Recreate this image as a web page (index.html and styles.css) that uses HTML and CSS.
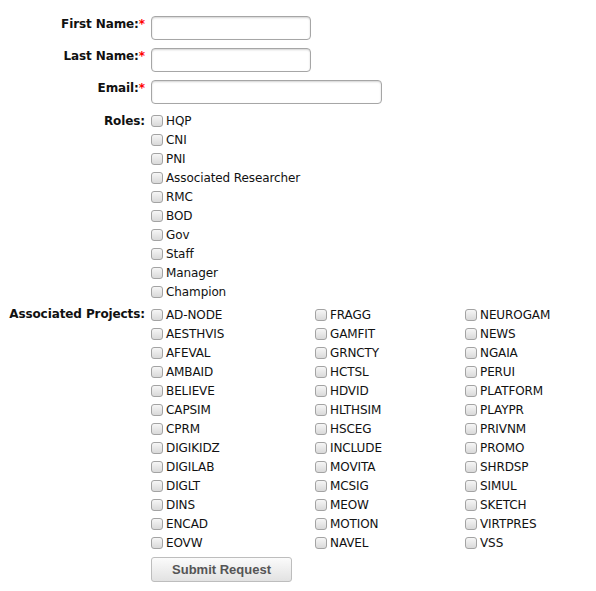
FILE: index.html
```html
<!DOCTYPE html>
<html>
<head>
<meta charset="utf-8">
<link rel="stylesheet" href="styles.css">
</head>
<body>
<form class="form">
  <div class="label">First Name:<span class="req">*</span></div>
  <div class="field"><input class="text short" type="text"></div>

  <div class="label">Last Name:<span class="req">*</span></div>
  <div class="field"><input class="text short" type="text"></div>

  <div class="label">Email:<span class="req">*</span></div>
  <div class="field"><input class="text long" type="text"></div>

  <div class="label list-label">Roles:</div>
  <div class="field roles">
    <label class="item"><input type="checkbox" class="cb">HQP</label>
    <label class="item"><input type="checkbox" class="cb">CNI</label>
    <label class="item"><input type="checkbox" class="cb">PNI</label>
    <label class="item"><input type="checkbox" class="cb">Associated Researcher</label>
    <label class="item"><input type="checkbox" class="cb">RMC</label>
    <label class="item"><input type="checkbox" class="cb">BOD</label>
    <label class="item"><input type="checkbox" class="cb">Gov</label>
    <label class="item"><input type="checkbox" class="cb">Staff</label>
    <label class="item"><input type="checkbox" class="cb">Manager</label>
    <label class="item"><input type="checkbox" class="cb">Champion</label>
  </div>

  <div class="label list-label projects-label">Associated Projects:</div>
  <div class="field projects">
    <div class="col">
      <label class="item"><input type="checkbox" class="cb">AD-NODE</label>
      <label class="item"><input type="checkbox" class="cb">AESTHVIS</label>
      <label class="item"><input type="checkbox" class="cb">AFEVAL</label>
      <label class="item"><input type="checkbox" class="cb">AMBAID</label>
      <label class="item"><input type="checkbox" class="cb">BELIEVE</label>
      <label class="item"><input type="checkbox" class="cb">CAPSIM</label>
      <label class="item"><input type="checkbox" class="cb">CPRM</label>
      <label class="item"><input type="checkbox" class="cb">DIGIKIDZ</label>
      <label class="item"><input type="checkbox" class="cb">DIGILAB</label>
      <label class="item"><input type="checkbox" class="cb">DIGLT</label>
      <label class="item"><input type="checkbox" class="cb">DINS</label>
      <label class="item"><input type="checkbox" class="cb">ENCAD</label>
      <label class="item"><input type="checkbox" class="cb">EOVW</label>
    </div>
    <div class="col">
      <label class="item"><input type="checkbox" class="cb">FRAGG</label>
      <label class="item"><input type="checkbox" class="cb">GAMFIT</label>
      <label class="item"><input type="checkbox" class="cb">GRNCTY</label>
      <label class="item"><input type="checkbox" class="cb">HCTSL</label>
      <label class="item"><input type="checkbox" class="cb">HDVID</label>
      <label class="item"><input type="checkbox" class="cb">HLTHSIM</label>
      <label class="item"><input type="checkbox" class="cb">HSCEG</label>
      <label class="item"><input type="checkbox" class="cb">INCLUDE</label>
      <label class="item"><input type="checkbox" class="cb">MOVITA</label>
      <label class="item"><input type="checkbox" class="cb">MCSIG</label>
      <label class="item"><input type="checkbox" class="cb">MEOW</label>
      <label class="item"><input type="checkbox" class="cb">MOTION</label>
      <label class="item"><input type="checkbox" class="cb">NAVEL</label>
    </div>
    <div class="col">
      <label class="item"><input type="checkbox" class="cb">NEUROGAM</label>
      <label class="item"><input type="checkbox" class="cb">NEWS</label>
      <label class="item"><input type="checkbox" class="cb">NGAIA</label>
      <label class="item"><input type="checkbox" class="cb">PERUI</label>
      <label class="item"><input type="checkbox" class="cb">PLATFORM</label>
      <label class="item"><input type="checkbox" class="cb">PLAYPR</label>
      <label class="item"><input type="checkbox" class="cb">PRIVNM</label>
      <label class="item"><input type="checkbox" class="cb">PROMO</label>
      <label class="item"><input type="checkbox" class="cb">SHRDSP</label>
      <label class="item"><input type="checkbox" class="cb">SIMUL</label>
      <label class="item"><input type="checkbox" class="cb">SKETCH</label>
      <label class="item"><input type="checkbox" class="cb">VIRTPRES</label>
      <label class="item"><input type="checkbox" class="cb">VSS</label>
    </div>
  </div>

  <div class="label"></div>
  <div class="field submit-row"><button type="button" class="btn">Submit Request</button></div>
</form>
</body>
</html>
```

FILE: styles.css
```css
html, body {
  background: #ffffff;
}
body {
  margin: 8px;
  font-family: "DejaVu Sans", Verdana, sans-serif;
  font-size: 12px;
  color: #000;
}
.form {
  display: grid;
  grid-template-columns: 137px 1fr;
  column-gap: 6px;
  padding-top: 8px;
}
.label {
  text-align: right;
  font-weight: bold;
  white-space: nowrap;
  line-height: 15px;
  padding-top: 1px;
  color: #111;
  letter-spacing: -0.1px;
}
.req {
  color: #ff0000;
}
.field {
  margin-bottom: 8px;
}
.text {
  display: block;
  box-sizing: border-box;
  height: 24px;
  margin: 0;
  border: 1px solid #a6a6a6;
  border-radius: 4px;
  box-shadow: inset 0 1px 2px rgba(0, 0, 0, 0.18);
  background: #fff;
  padding: 2px 4px;
  font-family: inherit;
  font-size: 12px;
}
.short {
  width: 160px;
}
.long {
  width: 231px;
}
.list-label {
  line-height: 19px;
  padding-top: 0;
}
.projects-label {
  margin-top: -1px;
}
.roles {
  margin-bottom: 4px;
}
.item {
  display: flex;
  align-items: flex-start;
  height: 19px;
  line-height: 19px;
  white-space: nowrap;
  color: #111;
  letter-spacing: -0.1px;
}
.cb {
  appearance: none;
  -webkit-appearance: none;
  box-sizing: border-box;
  width: 12px;
  height: 12px;
  margin: 3px 3px 0 0;
  border: 1px solid #a3a3a3;
  border-radius: 3px;
  background: linear-gradient(#f6f6f6, #d9d9d9);
  flex: none;
}
.projects {
  display: grid;
  grid-template-columns: 164px 150px auto;
  margin-bottom: 4px;
}
.submit-row {
  margin-bottom: 0;
}
.btn {
  box-sizing: border-box;
  width: 141px;
  height: 25px;
  margin: 0;
  padding: 0;
  border: 1px solid #bdbdbd;
  border-radius: 3px;
  background: linear-gradient(#fbfbfb, #e2e2e2);
  font-family: "Liberation Sans", Arial, sans-serif;
  font-weight: bold;
  font-size: 13px;
  color: #555;
}
```
